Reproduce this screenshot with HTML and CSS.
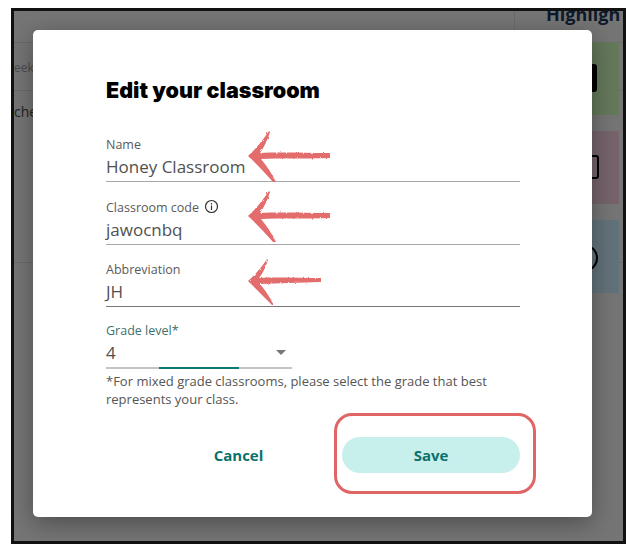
FILE: index.html
```html
<!DOCTYPE html>
<html lang="en">
<head>
    <meta charset="UTF-8">
    <meta name="viewport" content="width=device-width, initial-scale=1.0">
    <title>Edit your classroom</title>
    <link rel="stylesheet" href="styles.css">
</head>
<body>
    <div class="frame">
        <!-- page behind the modal -->
        <div class="bg-line bg-line-1"></div>
        <div class="bg-line bg-line-2"></div>
        <div class="bg-line bg-line-3"></div>
        <div class="bg-line-v"></div>
        <span class="bg-text bg-week">eek</span>
        <span class="bg-text bg-teacher">che</span>
        <span class="bg-heading">Highligh</span>
        <div class="bg-card bg-card-green"><span class="bg-icon bg-icon-green"></span></div>
        <div class="bg-card bg-card-pink"><span class="bg-icon bg-icon-pink"></span></div>
        <div class="bg-card bg-card-blue"><span class="bg-icon bg-icon-blue"></span></div>

        <div class="dialog">
            <h1>Edit your classroom</h1>

            <div class="field">
                <label>Name</label>
                <div class="value">Honey Classroom</div>
            </div>
            <div class="field">
                <label>Classroom code
                    <svg class="info" width="15" height="15" viewBox="0 0 15 15" fill="none" stroke="#333" stroke-width="1.2">
                        <circle cx="7.5" cy="7.5" r="6"/>
                        <path d="M7.5 6.6v4.4M7.5 4v1.5"/>
                    </svg>
                </label>
                <div class="value">jawocnbq</div>
            </div>
            <div class="field field-dark">
                <label>Abbreviation</label>
                <div class="value">JH</div>
            </div>

            <div class="select">
                <label>Grade level*</label>
                <div class="value">4</div>
                <span class="caret"></span>
                <span class="select-focus"></span>
            </div>
            <p class="hint">*For mixed grade classrooms, please select the grade that best represents your class.</p>

            <div class="actions">
                <button class="btn-cancel">Cancel</button>
                <button class="btn-save">Save</button>
            </div>
        </div>

        <!-- red annotations on top of the screenshot -->
        <svg class="arrow arrow-1" width="90" height="56" viewBox="0 0 90 56" fill="#e36c6c">
            <defs>
                <filter id="rough" x="-10%" y="-10%" width="120%" height="120%">
                    <feTurbulence type="fractalNoise" baseFrequency="0.35" numOctaves="2" seed="4"/>
                    <feDisplacementMap in="SourceGraphic" scale="2.5"/>
                </filter>
            </defs>
            <path filter="url(#rough)" d="M3 27 C11 20 18 11 24 2 L25 3 C23 10 19 18 15 24 C35 23 60 24 85 24 L85 29 C60 30 35 29 16 30 C22 37 27 45 31 53 L28 53 C20 44 11 34 3 27Z"/>
        </svg>
        <svg class="arrow arrow-2" width="90" height="56" viewBox="0 0 90 56" fill="#e36c6c">
            <path filter="url(#rough)" d="M3 27 C11 20 18 11 24 2 L25 3 C23 10 19 18 15 24 C35 23 60 24 85 24 L85 29 C60 30 35 29 16 30 C22 37 27 45 31 53 L28 53 C20 44 11 34 3 27Z"/>
        </svg>
        <svg class="arrow arrow-3" width="82" height="50" viewBox="0 0 82 50" fill="#e36c6c">
            <path filter="url(#rough)" d="M3 24 C10 18 17 10 22 2 L23 3 C21 9 18 16 14 21 C32 20 55 21 76 21 L76 25 C55 26 32 26 15 27 C20 33 25 40 28 47 L26 47 C19 40 10 31 3 24Z"/>
        </svg>
        <div class="save-highlight"></div>
    </div>
</body>
</html>
```

FILE: styles.css
```css
body {
    margin: 0;
    background-color: #fff;
    font-family: 'Open Sans', sans-serif;
    color: #555;
}

.frame {
    position: relative;
    width: 609px;
    height: 530px;
    margin: 8px 0 0 11px;
    border: 3px solid #111;
    overflow: hidden;
    background-color: #757575;
}

/* behind the modal */
.bg-line {
    position: absolute;
    left: 0;
    width: 100%;
    height: 1px;
    background-color: #6a6a6a;
}

.bg-line-1 { top: 31px; }
.bg-line-2 { top: 79px; }
.bg-line-3 { top: 251px; }

.bg-line-v {
    position: absolute;
    left: 500px;
    top: 0;
    width: 1px;
    height: 20px;
    background-color: #6a6a6a;
}

.bg-text {
    position: absolute;
    left: 0;
    font-size: 12px;
    color: #3c3c3c;
}

.bg-week { top: 48px; color: #4c4c4c; }
.bg-teacher { top: 91px; font-size: 14px; color: #222; }

.bg-heading {
    position: absolute;
    left: 532px;
    top: -9px;
    font-size: 18px;
    font-weight: 700;
    color: #0d1a2a;
}

.bg-card {
    position: absolute;
    left: 560px;
    width: 45px;
    height: 73px;
}

.bg-card-green { top: 31px; background-color: #64785a; }
.bg-card-pink { top: 120px; background-color: #76636c; }
.bg-card-blue { top: 209px; background-color: #62727a; }

.bg-icon {
    position: absolute;
    left: 0;
    box-sizing: border-box;
}

.bg-icon-green { top: 22px; width: 23px; height: 28px; background-color: #000; border-radius: 3px; }
.bg-icon-pink { top: 24px; width: 25px; height: 24px; border: 2px solid #000; border-radius: 3px; }
.bg-icon-blue { top: 25px; width: 24px; height: 26px; border: 2px solid #000; border-radius: 50%; }

/* modal */
.dialog {
    position: relative;
    box-sizing: border-box;
    width: 559px;
    height: 487px;
    margin: 19px 0 0 19px;
    padding: 47px 72px 0 73px;
    background-color: #fff;
    border-radius: 5px;
    box-shadow: 0 6px 24px rgba(0, 0, 0, 0.35);
}

h1 {
    margin: 0 0 33px 0;
    font-family: 'Inter', sans-serif;
    font-size: 21.5px;
    line-height: 26px;
    font-weight: 900;
    color: #000;
}

.field {
    height: 45px;
    margin-bottom: 16.5px;
    border-bottom: 1px solid #a8a8a8;
}

.field-dark {
    margin-bottom: 14.5px;
    border-bottom-color: #777;
}

label {
    display: block;
    font-size: 12.5px;
    line-height: 17px;
    color: #5a5a5a;
}

.info {
    margin-left: 2px;
    vertical-align: -2px;
}

.value {
    font-size: 17px;
    line-height: 27px;
    color: #505050;
}

.select {
    position: relative;
    width: 186px;
    height: 45px;
    border-bottom: 2px solid #c4c4c4;
}

.select label {
    color: #3f6f6b;
}

.caret {
    position: absolute;
    right: 6px;
    top: 28px;
    border-left: 5px solid transparent;
    border-right: 5px solid transparent;
    border-top: 5px solid #777;
}

.select-focus {
    position: absolute;
    left: 53px;
    bottom: -2px;
    width: 80px;
    height: 2px;
    background-color: #0a7a72;
}

.hint {
    margin: 3px 0 0 0;
    font-size: 13px;
    line-height: 18px;
    color: #555;
}

.actions {
    display: flex;
    align-items: center;
    margin-top: 29px;
}

button {
    border: none;
    background: none;
    font-family: 'Open Sans', sans-serif;
    font-size: 15px;
    font-weight: 700;
    color: #0b716b;
}

.btn-cancel {
    width: 177px;
    margin-left: 44px;
    margin-right: 15px;
    padding: 0;
}

.btn-save {
    width: 178px;
    height: 36px;
    border-radius: 18px;
    background-color: #c7efeb;
}

/* annotations */
.arrow {
    position: absolute;
}

.arrow-1 { left: 231px; top: 118px; }
.arrow-2 { left: 231px; top: 178px; }
.arrow-3 { left: 231px; top: 246px; }

.save-highlight {
    position: absolute;
    left: 320px;
    top: 402px;
    width: 196px;
    height: 75px;
    border: 3px solid #e06666;
    border-radius: 18px;
}
```
